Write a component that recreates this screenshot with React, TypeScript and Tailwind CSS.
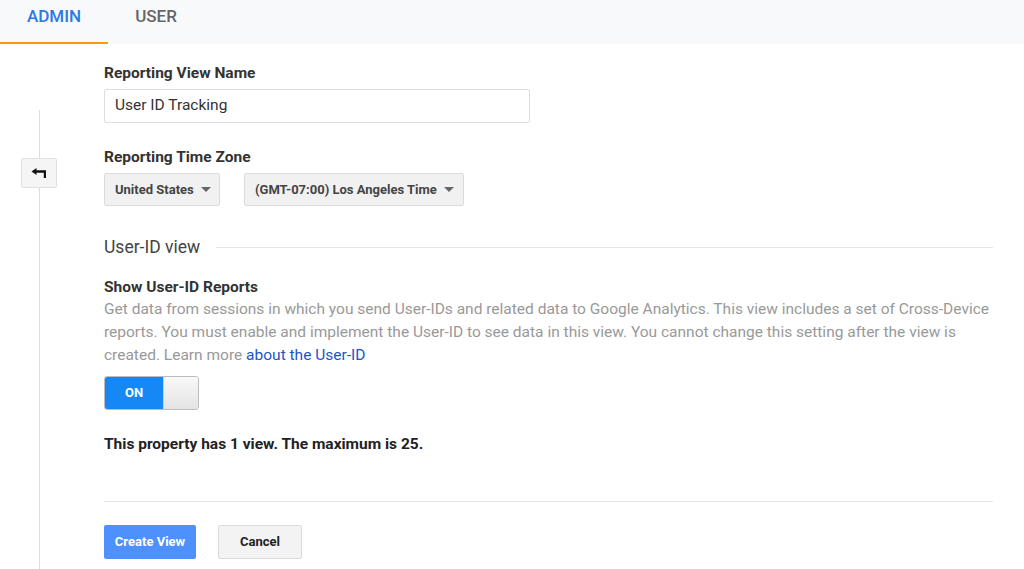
import React, { useState } from "react";

function Caret() {
  return (
    <svg width="10" height="5" viewBox="0 0 10 5" className="ml-[7px]">
      <path d="M0 0 L10 0 L5 5 Z" fill="#666" />
    </svg>
  );
}

export default function App() {
  const [on, setOn] = useState(true);

  return (
    <div
      className="w-[1024px] h-[569px] overflow-hidden bg-white text-[#333]"
      style={{ fontFamily: "Roboto, 'Liberation Sans', sans-serif" }}
    >
      {/* Tabs */}
      <div className="flex h-[44px] bg-[#f8f9fa]">
        <div className="flex w-[108px] justify-center border-b-2 border-[#f39c12] pt-[4px] text-[17px] font-medium text-[#2a7ae2]">
          ADMIN
        </div>
        <div className="flex w-[96px] justify-center pt-[4px] text-[17px] font-medium text-[#666]">
          USER
        </div>
      </div>

      <div className="flex">
        {/* Left rail */}
        <div className="relative w-[104px] shrink-0">
          <div className="absolute left-[39px] top-[66px] h-[500px] w-px bg-[#ddd]" />
          <button className="absolute left-[21px] top-[114px] flex h-[30px] w-[36px] items-center justify-center rounded-[2px] border border-[#e0e0e0] bg-[#f5f5f5]">
            <svg width="17" height="11" viewBox="0 0 16 11">
              <path d="M0 3.5 L5 0 L5 2.3 L14.5 2.3 L14.5 10 L12.3 10 L12.3 4.7 L5 4.7 L5 7 Z" fill="#111" />
            </svg>
          </button>
        </div>

        {/* Form */}
        <div className="w-[889px] pt-[19px]">
          <div className="text-[15.5px] font-bold leading-[20px] text-[#333]">Reporting View Name</div>
          <div className="mt-[6px] flex h-[34px] w-[426px] items-center rounded-[2px] border border-[#dedede] px-[10px] text-[15.5px] text-[#333]">
            User ID Tracking
          </div>

          <div className="mt-[24px] text-[15.5px] font-bold leading-[20px] text-[#333]">Reporting Time Zone</div>
          <div className="mt-[6px] flex gap-[24px]">
            <button className="flex h-[33px] w-[116px] items-center rounded-[2px] border border-[#dcdcdc] bg-[#f1f1f1] pl-[10px] text-[13px] font-bold text-[#444]">
              United States
              <Caret />
            </button>
            <button className="flex h-[33px] w-[220px] items-center rounded-[2px] border border-[#dcdcdc] bg-[#f1f1f1] pl-[10px] text-[13px] font-bold text-[#444]">
              (GMT-07:00) Los Angeles Time
              <Caret />
            </button>
          </div>

          <div className="mt-[30px] flex items-center">
            <span className="text-[17.5px] leading-[22px] text-[#444]">User-ID view</span>
            <div className="ml-[16px] h-px flex-1 bg-[#e5e5e5]" />
          </div>

          <div className="mt-[19px] text-[15.5px] font-bold leading-[20px] text-[#333]">Show User-ID Reports</div>
          <p className="mt-px text-[15.5px] leading-[23px] text-[#999]">
            Get data from sessions in which you send User-IDs and related data to Google Analytics. This view includes a set of Cross-Device
            reports. You must enable and implement the User-ID to see data in this view. You cannot change this setting after the view is
            created. Learn more <a className="text-[#1a55c9]">about the User-ID</a>
          </p>

          <button
            onClick={() => setOn(!on)}
            className="mt-[9px] flex h-[34px] w-[95px] overflow-hidden rounded-[3px] border border-[#bdbdbd]"
          >
            <span className="flex h-full w-[58px] items-center justify-center bg-[#1588f5] text-[13px] font-bold text-white">
              ON
            </span>
            <span className="h-full flex-1 bg-gradient-to-b from-[#f8f8f8] to-[#e4e4e4] border-l border-[#cfcfcf]" />
          </button>

          <div className="mt-[24px] text-[15.5px] font-bold leading-[20px] text-[#222]">
            This property has 1 view. The maximum is 25.
          </div>

          <div className="mt-[47px] h-px w-full bg-[#e5e5e5]" />

          <div className="mt-[23px] flex gap-[22px]">
            <button className="flex h-[34px] w-[92px] items-center justify-center rounded-[2px] bg-[#4d90fe] text-[13px] font-bold text-white">
              Create View
            </button>
            <button className="flex h-[34px] w-[84px] items-center justify-center rounded-[2px] border border-[#dcdcdc] bg-[#f3f3f3] text-[13px] font-bold text-[#222]">
              Cancel
            </button>
          </div>
        </div>
      </div>
    </div>
  );
}
